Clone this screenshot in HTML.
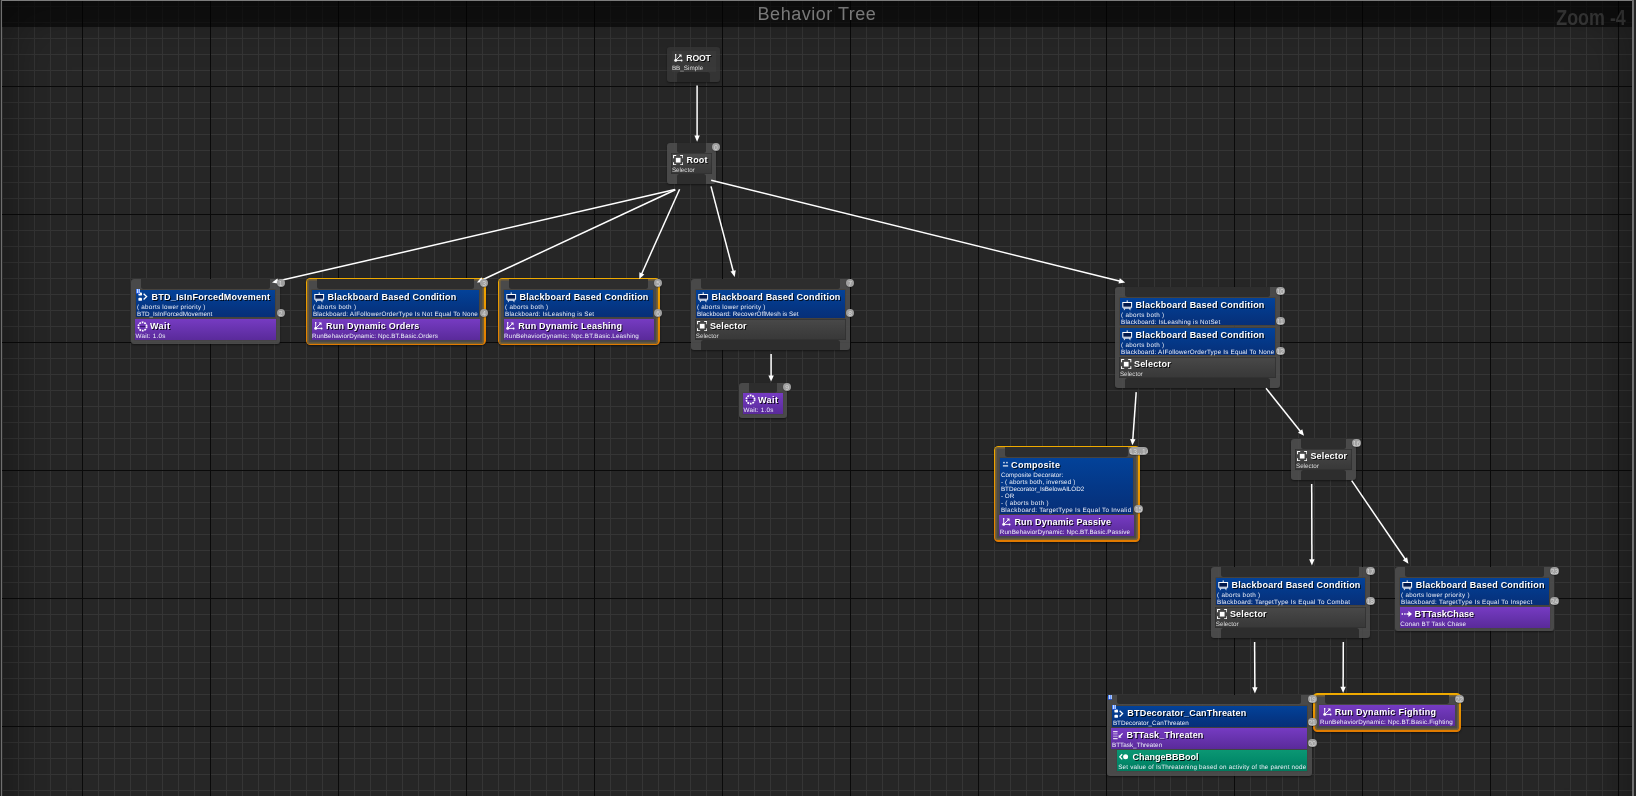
<!DOCTYPE html>
<html lang="en"><head><meta charset="utf-8"><title>Behavior Tree</title>
<style>
html,body{margin:0;padding:0;background:#262626;}
body{width:1636px;height:796px;overflow:hidden;position:relative;font-family:"Liberation Sans",sans-serif;}
#g{will-change:transform;position:absolute;left:0;top:0;width:1636px;height:796px;overflow:hidden;background-color:#262626;
background-image:
linear-gradient(90deg,#0a0a0a 1px,transparent 1px),
linear-gradient(0deg,transparent 127px,#0a0a0a 127px),
linear-gradient(90deg,#353535 1px,transparent 1px),
linear-gradient(0deg,transparent 15px,#353535 15px);
background-size:128px 128px,128px 128px,16px 16px,16px 16px;
background-position:82px 0,0 -42px,2px 0,0 -10px;}
#vig{position:absolute;left:0;top:0;width:1636px;height:860px;box-shadow:inset 0 0 56px 5px rgba(0,0,0,.42);pointer-events:none}
#hd{position:absolute;left:0;top:1px;width:1636px;height:25.7px;background:rgba(0,0,0,.57)}
#ttl{position:absolute;left:0;width:1634px;top:4px;text-align:center;font-size:18px;line-height:21px;color:#8f8f8f;letter-spacing:.52px}
#zm{position:absolute;right:10.2px;top:6.6px;font-size:21.3px;line-height:23px;font-weight:bold;color:#3b3b3b;transform:scaleX(.84);transform-origin:100% 50%;white-space:pre}
#bt{position:absolute;left:0;top:0;width:1636px;height:1px;background:#7d7d7d}
#bl{position:absolute;left:1px;top:0;width:1.4px;height:796px;background:#6f6f6f}
#br{position:absolute;left:1632.3px;top:0;width:1.5px;height:796px;background:#6f6f6f}
#bl0{position:absolute;left:0;top:0;width:1px;height:796px;background:#242424}
#br0{position:absolute;left:1634px;top:0;width:2px;height:796px;background:#242424}
#g div,#g svg{position:absolute}
.body{background:rgba(79,79,79,.88);border-radius:3.2px;box-shadow:0 1px 2px rgba(0,0,0,.45)}
.rootbody{background:rgba(56,56,56,.8);border-radius:3.2px;box-shadow:0 1px 2px rgba(0,0,0,.45)}
.rootin{background:rgba(62,62,62,.6)}
.rootpin{background:#272727;border-radius:2.5px 2.5px 0 0}
.og{border-radius:4.5px;background:linear-gradient(#f0ab00,#e07a00);box-shadow:0 1px 2px rgba(0,0,0,.5)}
.ob{background:#4a4a4a;border-radius:2.8px;box-shadow:inset 0 0 0 1.6px rgba(236,160,0,.27)}
.pin{background:#2d2d2d}
.pt{border-radius:0 0 2.5px 2.5px}
.pb{border-radius:2.5px 2.5px 0 0}
.bx{box-sizing:border-box}
.blue{background:linear-gradient(#034299,#043888 50%,#072f78);box-shadow:0 0 0 .6px rgba(70,62,50,.9)}
.purple{background:linear-gradient(#763bc2,#6632ac 55%,#5a2a9a);box-shadow:0 0 0 .6px rgba(70,62,70,.7)}
.green{background:linear-gradient(#0b9773,#038b6b 50%,#017b5e);box-shadow:0 0 0 .6px rgba(60,70,62,.7)}
.grayb{background:linear-gradient(#494949,#3e3e3e 60%,#383838);box-shadow:inset 0 0 0 .8px rgba(48,48,48,.9)}
.tt{font-weight:bold;font-size:9px;line-height:10.4px;color:#fff;white-space:pre;text-shadow:1px 1px 0 rgba(0,0,0,.85)}
.st{font-size:6.3px;line-height:7.3px;text-rendering:geometricPrecision;color:#edf0f9;white-space:pre}
.bd{height:8.2px;border-radius:4.1px;background:#a0a0a0;color:#d4d4d4;font-size:6.7px;line-height:9.9px;text-align:center;overflow:hidden;box-shadow:0 .6px 1px rgba(0,0,0,.5);letter-spacing:-.1px}
.pill{height:8.05px;line-height:9.9px;border-radius:4.02px;letter-spacing:.45px;white-space:pre;text-align:left;text-indent:.3px}
.mk{width:3.9px;height:3.7px;background:linear-gradient(90deg,#3f7cff 0,#3f7cff 22%,#c9dcff 30%,#c9dcff 44%,#3f7cff 52%,#3f7cff 60%,#c9dcff 68%,#c9dcff 82%,#5d90ff 100%);box-shadow:0 .8px 0 #2a56d6}
.sg{color:#dcdcdc}
.wires{left:0;top:0}
</style></head>
<body>
<div id="g">
<div id="hd"></div>
<div id="ttl">Behavior Tree</div>
<div id="zm">Zoom -4</div>
<div class="rootbody" style="left:666.9px;top:47.1px;width:52.9px;height:34.8px;"></div>
<div class="rootin" style="left:671.85px;top:51.2px;width:44.55px;height:20.8px;"></div>
<div class="rootpin" style="left:677.05px;top:72px;width:32.65px;height:9.9px;"></div>
<svg class="ic" style="left:672.6px;top:52.9px" width="10" height="10" viewBox="0 0 10 10"><path d="M2.7 1.5V7.4H8.6" stroke="#fff" stroke-width="0.9" fill="none"/><path d="M2.7 7.4L7.3 2.8" stroke="#fff" stroke-width="1" fill="none"/><circle cx="2.7" cy="7.4" r="1.45" fill="#fff"/><circle cx="8.6" cy="7.5" r="0.95" fill="#fff"/><path d="M5.5 1.6H8.5V4.6Z" fill="#fff"/><circle cx="2.7" cy="1.7" r="0.75" fill="#fff"/></svg>
<div class="tt" style="left:686.3px;top:53px;font-size:8.69px;letter-spacing:-0.15px">ROOT</div>
<div class="st sg" style="left:671.9px;top:65px;letter-spacing:0.02px">BB_Simple</div>
<div class="body" style="left:667.2px;top:143.2px;width:48.7px;height:40.7px;"></div>
<div class="pin pt" style="left:677.1px;top:143.2px;width:28.5px;height:9.75px;"></div>
<div class="bx grayb" style="left:671.1px;top:153.4px;width:40.8px;height:20.3px;"></div>
<div class="pin pb" style="left:677.1px;top:174.3px;width:28.5px;height:9.6px;"></div>
<svg class="ic" style="left:672.8px;top:154.7px" width="10.4" height="10.4" viewBox="0 0 11 11"><rect x="3" y="3" width="5" height="5" fill="#fff"/><path d="M0.6 3.4V0.6H3.4M7.6 0.6H10.4V3.4M10.4 7.6V10.4H7.6M3.4 10.4H0.6V7.6" stroke="#fff" stroke-width="1.1" fill="none"/></svg>
<div class="tt" style="left:686.5px;top:155px;letter-spacing:0.15px">Root</div>
<div class="st sg" style="left:671.9px;top:167px;letter-spacing:-0.04px">Selector</div>
<div class="body" style="left:131.1px;top:279px;width:149px;height:64.9px;"></div>
<div class="pin pt" style="left:141px;top:279px;width:128.8px;height:9.75px;"></div>
<div class="bx blue" style="left:136.1px;top:290.1px;width:138.9px;height:27.3px;"></div>
<svg class="ic" style="left:137.8px;top:292.2px" width="10" height="10" viewBox="0 0 10 10"><rect x="0.4" y="0.6" width="3.6" height="3" rx="0.9" fill="#fff"/><rect x="0.4" y="5.8" width="3.6" height="3" rx="0.9" fill="#fff"/><path d="M5.6 1.7L8.6 4.6L5.6 7.5" stroke="#fff" stroke-width="1.3" fill="none"/></svg>
<div class="tt" style="left:151.5px;top:292px;letter-spacing:0.24px">BTD_IsInForcedMovement</div>
<div class="st" style="left:137px;top:304px;letter-spacing:0.24px">( aborts lower priority )</div>
<div class="st" style="left:137px;top:311px;letter-spacing:-0px">BTD_IsInForcedMovement</div>
<div class="bx purple" style="left:135.1px;top:318.9px;width:140.9px;height:20.95px;"></div>
<svg class="ic" style="left:136.5px;top:320.5px" width="11" height="11" viewBox="0 0 11 11"><circle cx="5.5" cy="5.5" r="4.15" fill="none" stroke="#fff" stroke-width="1.7" stroke-dasharray="1.75 0.86"/><path d="M2.9 5.5H8.1" stroke="#2c1458" stroke-width="0.8"/></svg>
<div class="tt" style="left:150px;top:321px;letter-spacing:0.41px">Wait</div>
<div class="st" style="left:135.6px;top:333px;letter-spacing:0.22px">Wait: 1.0s</div>
<div class="mk" style="left:136.3px;top:289.2px"></div>
<div class="og" style="left:305.55px;top:277.65px;width:180.2px;height:67.7px;"></div>
<div class="body ob" style="left:307.1px;top:279.2px;width:177.1px;height:64.6px;"></div>
<div class="pin pt" style="left:317px;top:279.2px;width:156.9px;height:9.75px;"></div>
<div class="bx blue" style="left:312px;top:290.2px;width:167.1px;height:26.9px;"></div>
<svg class="ic" style="left:313.8px;top:291.8px" width="11" height="11" viewBox="0 0 11 11"><rect x="0.8" y="2.5" width="8.8" height="4.7" fill="#03194c" stroke="#fff" stroke-width="1"/><path d="M5.2 0.4V2.2" stroke="#fff" stroke-width="1" fill="none"/><path d="M1.2 8.3H9.2M2.9 8.3L2.2 10.2M7.5 8.3L8.2 10.2" stroke="#fff" stroke-width="0.8" fill="none"/></svg>
<div class="tt" style="left:327.5px;top:292px;letter-spacing:0.23px">Blackboard Based Condition</div>
<div class="st" style="left:312.9px;top:304px;letter-spacing:0.28px">( aborts both )</div>
<div class="st" style="left:312.9px;top:311px;letter-spacing:0.19px">Blackboard: AIFollowerOrderType Is Not Equal To None</div>
<div class="bx purple" style="left:311.5px;top:318.9px;width:168px;height:20.8px;"></div>
<svg class="ic" style="left:312.9px;top:320.7px" width="10" height="10" viewBox="0 0 10 10"><path d="M2.7 1.5V7.4H8.6" stroke="#fff" stroke-width="0.9" fill="none"/><path d="M2.7 7.4L7.3 2.8" stroke="#fff" stroke-width="1" fill="none"/><circle cx="2.7" cy="7.4" r="1.45" fill="#fff"/><circle cx="8.6" cy="7.5" r="0.95" fill="#fff"/><path d="M5.5 1.6H8.5V4.6Z" fill="#fff"/><circle cx="2.7" cy="1.7" r="0.75" fill="#fff"/></svg>
<div class="tt" style="left:326.1px;top:321px;letter-spacing:0.22px">Run Dynamic Orders</div>
<div class="st" style="left:312px;top:333px;letter-spacing:0.08px">RunBehaviorDynamic: Npc.BT.Basic.Orders</div>
<div class="og" style="left:497.65px;top:277.65px;width:162.2px;height:67.7px;"></div>
<div class="body ob" style="left:499.2px;top:279.2px;width:159.1px;height:64.6px;"></div>
<div class="pin pt" style="left:509.1px;top:279.2px;width:138.9px;height:9.75px;"></div>
<div class="bx blue" style="left:504.1px;top:290.2px;width:149.1px;height:26.9px;"></div>
<svg class="ic" style="left:505.9px;top:291.8px" width="11" height="11" viewBox="0 0 11 11"><rect x="0.8" y="2.5" width="8.8" height="4.7" fill="#03194c" stroke="#fff" stroke-width="1"/><path d="M5.2 0.4V2.2" stroke="#fff" stroke-width="1" fill="none"/><path d="M1.2 8.3H9.2M2.9 8.3L2.2 10.2M7.5 8.3L8.2 10.2" stroke="#fff" stroke-width="0.8" fill="none"/></svg>
<div class="tt" style="left:519.6px;top:292px;letter-spacing:0.23px">Blackboard Based Condition</div>
<div class="st" style="left:505px;top:304px;letter-spacing:0.28px">( aborts both )</div>
<div class="st" style="left:505px;top:311px;letter-spacing:0.22px">Blackboard: IsLeashing is Set</div>
<div class="bx purple" style="left:503.6px;top:318.9px;width:150px;height:20.8px;"></div>
<svg class="ic" style="left:505px;top:320.7px" width="10" height="10" viewBox="0 0 10 10"><path d="M2.7 1.5V7.4H8.6" stroke="#fff" stroke-width="0.9" fill="none"/><path d="M2.7 7.4L7.3 2.8" stroke="#fff" stroke-width="1" fill="none"/><circle cx="2.7" cy="7.4" r="1.45" fill="#fff"/><circle cx="8.6" cy="7.5" r="0.95" fill="#fff"/><path d="M5.5 1.6H8.5V4.6Z" fill="#fff"/><circle cx="2.7" cy="1.7" r="0.75" fill="#fff"/></svg>
<div class="tt" style="left:518.2px;top:321px;letter-spacing:0.23px">Run Dynamic Leashing</div>
<div class="st" style="left:504.1px;top:333px;letter-spacing:0.14px">RunBehaviorDynamic: Npc.BT.Basic.Leashing</div>
<div class="body" style="left:691.2px;top:278.8px;width:158.7px;height:71.1px;"></div>
<div class="pin pt" style="left:701.1px;top:278.8px;width:138.5px;height:9.75px;"></div>
<div class="bx blue" style="left:696.1px;top:290.1px;width:149.1px;height:27.5px;"></div>
<svg class="ic" style="left:697.9px;top:291.7px" width="11" height="11" viewBox="0 0 11 11"><rect x="0.8" y="2.5" width="8.8" height="4.7" fill="#03194c" stroke="#fff" stroke-width="1"/><path d="M5.2 0.4V2.2" stroke="#fff" stroke-width="1" fill="none"/><path d="M1.2 8.3H9.2M2.9 8.3L2.2 10.2M7.5 8.3L8.2 10.2" stroke="#fff" stroke-width="0.8" fill="none"/></svg>
<div class="tt" style="left:711.6px;top:292px;letter-spacing:0.23px">Blackboard Based Condition</div>
<div class="st" style="left:697px;top:304px;letter-spacing:0.24px">( aborts lower priority )</div>
<div class="st" style="left:697px;top:311px;letter-spacing:0.06px">Blackboard: RecoverOffMesh is Set</div>
<div class="bx grayb" style="left:695.3px;top:319.2px;width:150.3px;height:20.5px;"></div>
<svg class="ic" style="left:697.1px;top:320.8px" width="10.4" height="10.4" viewBox="0 0 11 11"><rect x="3" y="3" width="5" height="5" fill="#fff"/><path d="M0.6 3.4V0.6H3.4M7.6 0.6H10.4V3.4M10.4 7.6V10.4H7.6M3.4 10.4H0.6V7.6" stroke="#fff" stroke-width="1.1" fill="none"/></svg>
<div class="tt" style="left:709.9px;top:321px;letter-spacing:0.17px">Selector</div>
<div class="st sg" style="left:695.8px;top:333px;letter-spacing:-0.04px">Selector</div>
<div class="pin pb" style="left:701.1px;top:340.3px;width:138.5px;height:9.6px;"></div>
<div class="body" style="left:739.1px;top:383px;width:48px;height:35.1px;"></div>
<div class="pin pt" style="left:749px;top:383px;width:27.8px;height:9.75px;"></div>
<div class="bx purple" style="left:743.1px;top:393.05px;width:39.85px;height:20.65px;"></div>
<svg class="ic" style="left:744.5px;top:394.35px" width="11" height="11" viewBox="0 0 11 11"><circle cx="5.5" cy="5.5" r="4.15" fill="none" stroke="#fff" stroke-width="1.7" stroke-dasharray="1.75 0.86"/><path d="M2.9 5.5H8.1" stroke="#2c1458" stroke-width="0.8"/></svg>
<div class="tt" style="left:758px;top:395px;letter-spacing:0.41px">Wait</div>
<div class="st" style="left:743.6px;top:407px;letter-spacing:0.22px">Wait: 1.0s</div>
<div class="body" style="left:1114.9px;top:287.2px;width:165.3px;height:100.5px;"></div>
<div class="pin pt" style="left:1124.8px;top:287.2px;width:145.1px;height:9.75px;"></div>
<div class="bx blue" style="left:1120.1px;top:298.2px;width:154.9px;height:27px;"></div>
<svg class="ic" style="left:1121.9px;top:299.8px" width="11" height="11" viewBox="0 0 11 11"><rect x="0.8" y="2.5" width="8.8" height="4.7" fill="#03194c" stroke="#fff" stroke-width="1"/><path d="M5.2 0.4V2.2" stroke="#fff" stroke-width="1" fill="none"/><path d="M1.2 8.3H9.2M2.9 8.3L2.2 10.2M7.5 8.3L8.2 10.2" stroke="#fff" stroke-width="0.8" fill="none"/></svg>
<div class="tt" style="left:1135.6px;top:300px;letter-spacing:0.23px">Blackboard Based Condition</div>
<div class="st" style="left:1121px;top:312px;letter-spacing:0.28px">( aborts both )</div>
<div class="st" style="left:1121px;top:319px;letter-spacing:0.21px">Blackboard: IsLeashing is NotSet</div>
<div class="bx blue" style="left:1120.1px;top:328.1px;width:154.9px;height:27.3px;"></div>
<svg class="ic" style="left:1121.9px;top:329.7px" width="11" height="11" viewBox="0 0 11 11"><rect x="0.8" y="2.5" width="8.8" height="4.7" fill="#03194c" stroke="#fff" stroke-width="1"/><path d="M5.2 0.4V2.2" stroke="#fff" stroke-width="1" fill="none"/><path d="M1.2 8.3H9.2M2.9 8.3L2.2 10.2M7.5 8.3L8.2 10.2" stroke="#fff" stroke-width="0.8" fill="none"/></svg>
<div class="tt" style="left:1135.6px;top:330px;letter-spacing:0.23px">Blackboard Based Condition</div>
<div class="st" style="left:1121px;top:342px;letter-spacing:0.28px">( aborts both )</div>
<div class="st" style="left:1121px;top:349px;letter-spacing:0.2px">Blackboard: AIFollowerOrderType Is Equal To None</div>
<div class="bx grayb" style="left:1119.4px;top:357.3px;width:156.2px;height:20.3px;"></div>
<svg class="ic" style="left:1121.2px;top:358.9px" width="10.4" height="10.4" viewBox="0 0 11 11"><rect x="3" y="3" width="5" height="5" fill="#fff"/><path d="M0.6 3.4V0.6H3.4M7.6 0.6H10.4V3.4M10.4 7.6V10.4H7.6M3.4 10.4H0.6V7.6" stroke="#fff" stroke-width="1.1" fill="none"/></svg>
<div class="tt" style="left:1134px;top:359px;letter-spacing:0.17px">Selector</div>
<div class="st sg" style="left:1119.9px;top:371px;letter-spacing:-0.04px">Selector</div>
<div class="pin pb" style="left:1124.8px;top:378.1px;width:145.1px;height:9.6px;"></div>
<div class="og" style="left:993.55px;top:445.65px;width:146.2px;height:96.2px;"></div>
<div class="body ob" style="left:995.1px;top:447.2px;width:143.1px;height:93.1px;"></div>
<div class="pin pt" style="left:1005px;top:447.2px;width:122.9px;height:9.75px;"></div>
<div class="bx blue" style="left:999.9px;top:458.1px;width:133.5px;height:55.6px;"></div>
<svg class="ic" style="left:1001.5px;top:461.2px" width="7" height="7" viewBox="0 0 8 8"><rect x="1.5" y="1" width="1.5" height="1.7" fill="#fff"/><rect x="4.9" y="1" width="1.5" height="1.7" fill="#fff"/><path d="M1 5.6H7" stroke="#fff" stroke-width="1.3"/></svg>
<div class="tt" style="left:1011.1px;top:460px;letter-spacing:0.29px">Composite</div>
<div class="st" style="left:1000.9px;top:472px;letter-spacing:0.06px">Composite Decorator:</div>
<div class="st" style="left:1000.9px;top:479px;letter-spacing:0.16px">- ( aborts both, inversed )</div>
<div class="st" style="left:1000.9px;top:486px;letter-spacing:-0.01px">BTDecorator_IsBelowAILOD2</div>
<div class="st" style="left:1000.9px;top:493px;letter-spacing:0px">- OR</div>
<div class="st" style="left:1000.9px;top:500px;letter-spacing:0.29px">- ( aborts both )</div>
<div class="st" style="left:1000.9px;top:507px;letter-spacing:0.28px">Blackboard: TargetType Is Equal To Invalid</div>
<div class="bx purple" style="left:999.3px;top:515.2px;width:134.6px;height:20.5px;"></div>
<svg class="ic" style="left:1001.3px;top:517px" width="10" height="10" viewBox="0 0 10 10"><path d="M2.7 1.5V7.4H8.6" stroke="#fff" stroke-width="0.9" fill="none"/><path d="M2.7 7.4L7.3 2.8" stroke="#fff" stroke-width="1" fill="none"/><circle cx="2.7" cy="7.4" r="1.45" fill="#fff"/><circle cx="8.6" cy="7.5" r="0.95" fill="#fff"/><path d="M5.5 1.6H8.5V4.6Z" fill="#fff"/><circle cx="2.7" cy="1.7" r="0.75" fill="#fff"/></svg>
<div class="tt" style="left:1014.4px;top:517px;letter-spacing:0.17px">Run Dynamic Passive</div>
<div class="st" style="left:999.8px;top:529px;letter-spacing:0.12px">RunBehaviorDynamic: Npc.BT.Basic.Passive</div>
<div class="body" style="left:1291.2px;top:438.8px;width:64.8px;height:41px;"></div>
<div class="pin pt" style="left:1301.1px;top:438.8px;width:44.6px;height:9.75px;"></div>
<div class="bx grayb" style="left:1295px;top:449.3px;width:57px;height:20.4px;"></div>
<svg class="ic" style="left:1297px;top:450.9px" width="10.4" height="10.4" viewBox="0 0 11 11"><rect x="3" y="3" width="5" height="5" fill="#fff"/><path d="M0.6 3.4V0.6H3.4M7.6 0.6H10.4V3.4M10.4 7.6V10.4H7.6M3.4 10.4H0.6V7.6" stroke="#fff" stroke-width="1.1" fill="none"/></svg>
<div class="tt" style="left:1310.4px;top:451px;letter-spacing:0.17px">Selector</div>
<div class="st sg" style="left:1296px;top:463px;letter-spacing:-0.04px">Selector</div>
<div class="pin pb" style="left:1301.1px;top:470.2px;width:44.6px;height:9.6px;"></div>
<div class="body" style="left:1211px;top:567px;width:158.8px;height:70.6px;"></div>
<div class="pin pt" style="left:1220.9px;top:567px;width:138.6px;height:9.75px;"></div>
<div class="bx blue" style="left:1216.1px;top:578.2px;width:148.9px;height:27.2px;"></div>
<svg class="ic" style="left:1217.9px;top:579.8px" width="11" height="11" viewBox="0 0 11 11"><rect x="0.8" y="2.5" width="8.8" height="4.7" fill="#03194c" stroke="#fff" stroke-width="1"/><path d="M5.2 0.4V2.2" stroke="#fff" stroke-width="1" fill="none"/><path d="M1.2 8.3H9.2M2.9 8.3L2.2 10.2M7.5 8.3L8.2 10.2" stroke="#fff" stroke-width="0.8" fill="none"/></svg>
<div class="tt" style="left:1231.6px;top:580px;letter-spacing:0.23px">Blackboard Based Condition</div>
<div class="st" style="left:1217px;top:592px;letter-spacing:0.28px">( aborts both )</div>
<div class="st" style="left:1217px;top:599px;letter-spacing:0.26px">Blackboard: TargetType Is Equal To Combat</div>
<div class="bx grayb" style="left:1215.3px;top:607.3px;width:150.6px;height:20.4px;"></div>
<svg class="ic" style="left:1217.1px;top:608.9px" width="10.4" height="10.4" viewBox="0 0 11 11"><rect x="3" y="3" width="5" height="5" fill="#fff"/><path d="M0.6 3.4V0.6H3.4M7.6 0.6H10.4V3.4M10.4 7.6V10.4H7.6M3.4 10.4H0.6V7.6" stroke="#fff" stroke-width="1.1" fill="none"/></svg>
<div class="tt" style="left:1229.9px;top:609px;letter-spacing:0.17px">Selector</div>
<div class="st sg" style="left:1215.8px;top:621px;letter-spacing:-0.04px">Selector</div>
<div class="pin pb" style="left:1220.9px;top:628px;width:138.6px;height:9.6px;"></div>
<div class="body" style="left:1395.3px;top:566.9px;width:158.7px;height:64.6px;"></div>
<div class="pin pt" style="left:1405.2px;top:566.9px;width:138.5px;height:9.75px;"></div>
<div class="bx blue" style="left:1400.2px;top:578.2px;width:148.9px;height:27.2px;"></div>
<svg class="ic" style="left:1402px;top:579.8px" width="11" height="11" viewBox="0 0 11 11"><rect x="0.8" y="2.5" width="8.8" height="4.7" fill="#03194c" stroke="#fff" stroke-width="1"/><path d="M5.2 0.4V2.2" stroke="#fff" stroke-width="1" fill="none"/><path d="M1.2 8.3H9.2M2.9 8.3L2.2 10.2M7.5 8.3L8.2 10.2" stroke="#fff" stroke-width="0.8" fill="none"/></svg>
<div class="tt" style="left:1415.7px;top:580px;letter-spacing:0.23px">Blackboard Based Condition</div>
<div class="st" style="left:1401.1px;top:592px;letter-spacing:0.24px">( aborts lower priority )</div>
<div class="st" style="left:1401.1px;top:599px;letter-spacing:0.25px">Blackboard: TargetType Is Equal To Inspect</div>
<div class="bx purple" style="left:1399.5px;top:607px;width:150.2px;height:20.7px;"></div>
<svg class="ic" style="left:1401.1px;top:610.4px" width="12" height="8" viewBox="0 0 12 8"><path d="M0.6 4H2M3.2 4H4.6M5.6 4H8" stroke="#fff" stroke-width="1.6" fill="none"/><path d="M7.4 1L11 4L7.4 7Z" fill="#fff"/></svg>
<div class="tt" style="left:1414.6px;top:609px;letter-spacing:0.06px">BTTaskChase</div>
<div class="st" style="left:1400.2px;top:621px;letter-spacing:0.17px">Conan BT Task Chase</div>
<div class="body" style="left:1107.2px;top:694.7px;width:204.6px;height:81px;"></div>
<div class="pin pt" style="left:1117.1px;top:694.7px;width:184.4px;height:9.75px;"></div>
<div class="bx blue" style="left:1111.9px;top:706.1px;width:195.1px;height:20.5px;"></div>
<svg class="ic" style="left:1114.2px;top:708.8px" width="10" height="10" viewBox="0 0 10 10"><rect x="0.4" y="0.6" width="3.6" height="3" rx="0.9" fill="#fff"/><rect x="0.4" y="5.8" width="3.6" height="3" rx="0.9" fill="#fff"/><path d="M5.6 1.7L8.6 4.6L5.6 7.5" stroke="#fff" stroke-width="1.3" fill="none"/></svg>
<div class="tt" style="left:1127.3px;top:708px;letter-spacing:0.2px">BTDecorator_CanThreaten</div>
<div class="st" style="left:1112.9px;top:720px;letter-spacing:0px">BTDecorator_CanThreaten</div>
<div class="bx purple" style="left:1111.3px;top:728.3px;width:196.2px;height:20.3px;"></div>
<svg class="ic" style="left:1113.2px;top:730.6px" width="10" height="10" viewBox="0 0 10 10"><path d="M0.1 0.7H4.6M0.1 7.7H4.6" stroke="#fff" stroke-width="1" fill="none"/><path d="M0.1 2.9H4.6M0.1 5.2H4.6" stroke="#fff" stroke-opacity=".6" stroke-width="1" fill="none"/><path d="M9.6 2.4L6.8 5.2" stroke="#fff" stroke-width="1.2" fill="none"/><path d="M5.5 6.8L5.8 3.7L8.6 6.5Z" fill="#fff"/></svg>
<div class="tt" style="left:1126.5px;top:730px;letter-spacing:0.14px">BTTask_Threaten</div>
<div class="st" style="left:1111.9px;top:742px;letter-spacing:0.04px">BTTask_Threaten</div>
<div class="bx green" style="left:1117.3px;top:750.1px;width:189.6px;height:20.5px;"></div>
<svg class="ic" style="left:1118.8px;top:752.4px" width="10" height="10" viewBox="0 0 10 10"><path d="M3.2 2.2L0.8 4.8L3.2 7.4" stroke="#fff" stroke-width="1.3" fill="none"/><circle cx="6.6" cy="4.8" r="2.5" fill="#fff"/></svg>
<div class="tt" style="left:1132.4px;top:752px;letter-spacing:0.02px">ChangeBBBool</div>
<div class="st" style="left:1118.2px;top:764px;letter-spacing:0.21px">Set value of IsThreatening based on activity of the parent node</div>
<div class="mk" style="left:1107.7px;top:695.2px"></div>
<div class="mk" style="left:1111.8px;top:705.3px"></div>
<div class="og" style="left:1313.25px;top:693.15px;width:147.8px;height:38.8px;"></div>
<div class="body ob" style="left:1314.8px;top:694.7px;width:144.7px;height:35.7px;"></div>
<div class="pin pt" style="left:1324.7px;top:694.7px;width:124.5px;height:9.75px;"></div>
<div class="bx purple" style="left:1318.9px;top:705.3px;width:136.2px;height:20.7px;"></div>
<svg class="ic" style="left:1321.5px;top:707.1px" width="10" height="10" viewBox="0 0 10 10"><path d="M2.7 1.5V7.4H8.6" stroke="#fff" stroke-width="0.9" fill="none"/><path d="M2.7 7.4L7.3 2.8" stroke="#fff" stroke-width="1" fill="none"/><circle cx="2.7" cy="7.4" r="1.45" fill="#fff"/><circle cx="8.6" cy="7.5" r="0.95" fill="#fff"/><path d="M5.5 1.6H8.5V4.6Z" fill="#fff"/><circle cx="2.7" cy="1.7" r="0.75" fill="#fff"/></svg>
<div class="tt" style="left:1334.7px;top:707px;letter-spacing:0.31px">Run Dynamic Fighting</div>
<div class="st" style="left:1320px;top:719px;letter-spacing:0.17px">RunBehaviorDynamic: Npc.BT.Basic.Fighting</div>
<svg class="wires" width="1636" height="796" viewBox="0 0 1636 796">
<path d="M697.1 85.6L697.1 137.7" stroke="#fff" stroke-width="1.5" fill="none"/>
<path d="M697.1 141.7L694.4 135.5L699.8 135.5Z" fill="#fff"/>
<path d="M675 189.5L275.9 281.6" stroke="#fff" stroke-width="1.5" fill="none"/>
<path d="M272 282.5L277.43 278.48L278.65 283.74Z" fill="#fff"/>
<path d="M675.4 189.7L480.52 280.71" stroke="#fff" stroke-width="1.5" fill="none"/>
<path d="M476.9 282.4L481.38 277.33L483.66 282.22Z" fill="#fff"/>
<path d="M679.6 189.2L640.94 275.45" stroke="#fff" stroke-width="1.5" fill="none"/>
<path d="M639.3 279.1L639.37 272.34L644.3 274.55Z" fill="#fff"/>
<path d="M711 186.4L733.69 273.03" stroke="#fff" stroke-width="1.5" fill="none"/>
<path d="M734.7 276.9L730.52 271.59L735.74 270.22Z" fill="#fff"/>
<path d="M711.2 180.2L1121.32 281.44" stroke="#fff" stroke-width="1.5" fill="none"/>
<path d="M1125.2 282.4L1118.53 283.54L1119.83 278.29Z" fill="#fff"/>
<path d="M771.1 354L771.1 377.6" stroke="#fff" stroke-width="1.5" fill="none"/>
<path d="M771.1 381.6L768.4 375.4L773.8 375.4Z" fill="#fff"/>
<path d="M1136.2 392.1L1132.68 441.31" stroke="#fff" stroke-width="1.5" fill="none"/>
<path d="M1132.4 445.3L1130.15 438.92L1135.53 439.31Z" fill="#fff"/>
<path d="M1266 388.3L1301.5 432.68" stroke="#fff" stroke-width="1.5" fill="none"/>
<path d="M1304 435.8L1298.02 432.65L1302.24 429.27Z" fill="#fff"/>
<path d="M1311.7 484L1311.89 561.4" stroke="#fff" stroke-width="1.5" fill="none"/>
<path d="M1311.9 565.4L1309.18 559.21L1314.58 559.19Z" fill="#fff"/>
<path d="M1351.7 480.7L1406.15 560.5" stroke="#fff" stroke-width="1.5" fill="none"/>
<path d="M1408.4 563.8L1402.68 560.2L1407.14 557.16Z" fill="#fff"/>
<path d="M1254.6 642L1254.88 689.5" stroke="#fff" stroke-width="1.5" fill="none"/>
<path d="M1254.9 693.5L1252.16 687.32L1257.56 687.28Z" fill="#fff"/>
<path d="M1343.3 642L1343.12 689" stroke="#fff" stroke-width="1.5" fill="none"/>
<path d="M1343.1 693L1340.42 686.79L1345.82 686.81Z" fill="#fff"/>
</svg>
<div class="bd" style="left:711.8px;top:143.1px;width:8.2px">0</div>
<div class="bd" style="left:276.5px;top:278.9px;width:8.2px">1</div>
<div class="bd" style="left:276.5px;top:308.9px;width:8.2px">2</div>
<div class="bd" style="left:479.9px;top:279.1px;width:8.2px">3</div>
<div class="bd" style="left:479.9px;top:308.9px;width:8.2px">4</div>
<div class="bd" style="left:654px;top:279.1px;width:8.2px">5</div>
<div class="bd" style="left:654px;top:308.9px;width:8.2px">6</div>
<div class="bd" style="left:845.9px;top:278.9px;width:8.2px">7</div>
<div class="bd" style="left:845.9px;top:308.7px;width:8.2px">8</div>
<div class="bd" style="left:783px;top:383px;width:8.2px">9</div>
<div class="bd" style="left:1275.6px;top:287.1px;width:9.2px">10</div>
<div class="bd" style="left:1275.6px;top:316.9px;width:9.2px">11</div>
<div class="bd" style="left:1275.6px;top:347px;width:9.2px">12</div>
<div class="bd" style="left:1134px;top:505px;width:9.2px">15</div>
<div class="bd" style="left:1351.9px;top:438.9px;width:9.2px">16</div>
<div class="bd" style="left:1365.7px;top:567px;width:9.2px">17</div>
<div class="bd" style="left:1365.7px;top:597.1px;width:9.2px">18</div>
<div class="bd" style="left:1307.5px;top:695px;width:9.2px">19</div>
<div class="bd" style="left:1307.5px;top:739px;width:9.2px">20</div>
<div class="bd" style="left:1307.5px;top:718.1px;width:9.2px">21</div>
<div class="bd" style="left:1454.7px;top:694.8px;width:9.2px">22</div>
<div class="bd" style="left:1549.8px;top:567px;width:9.2px">23</div>
<div class="bd" style="left:1549.8px;top:597.1px;width:9.2px">24</div>
<div class="bd pill" style="left:1128.8px;top:447.05px;width:19.2px">13..14</div>
<div id="vig"></div>
<div id="bt"></div><div id="bl0"></div><div id="bl"></div><div id="br"></div><div id="br0"></div>
</div>
</body></html>
